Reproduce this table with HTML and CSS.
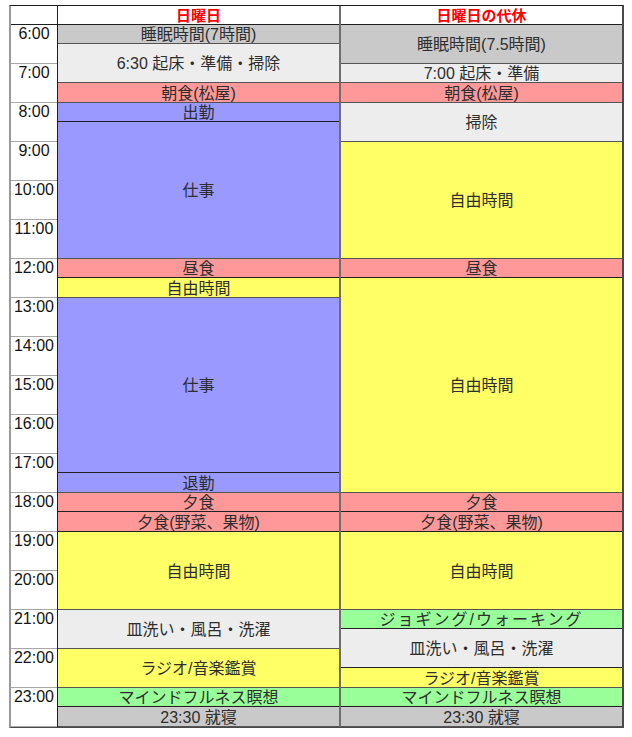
FILE: index.html
```html
<!DOCTYPE html>
<html lang="ja">
<head>
<meta charset="utf-8">
<title>スケジュール</title>
<link rel="stylesheet" href="styles.css">
</head>
<body>
<div class="table">
  <div class="col times">
    <div class="hd"></div>
    <div class="t">6:00</div>
    <div class="t">7:00</div>
    <div class="t">8:00</div>
    <div class="t">9:00</div>
    <div class="t">10:00</div>
    <div class="t">11:00</div>
    <div class="t">12:00</div>
    <div class="t">13:00</div>
    <div class="t">14:00</div>
    <div class="t">15:00</div>
    <div class="t">16:00</div>
    <div class="t">17:00</div>
    <div class="t">18:00</div>
    <div class="t">19:00</div>
    <div class="t">20:00</div>
    <div class="t">21:00</div>
    <div class="t">22:00</div>
    <div class="t">23:00</div>
  </div>
  <div class="col day1">
    <div class="hd red">日曜日</div>
    <div class="b s1 gray">睡眠時間(7時間)</div>
    <div class="b s2 light">6:30 起床・準備・掃除</div>
    <div class="b s1 pink">朝食(松屋)</div>
    <div class="b s1 blue strong">出勤</div>
    <div class="b s7 blue">仕事</div>
    <div class="b s1 pink strong">昼食</div>
    <div class="b s1 yellow">自由時間</div>
    <div class="b s9 blue strong">仕事</div>
    <div class="b s1 blue">退勤</div>
    <div class="b s1 pink strong">夕食</div>
    <div class="b s1 pink strong">夕食(野菜、果物)</div>
    <div class="b s4 yellow">自由時間</div>
    <div class="b s2 light">皿洗い・風呂・洗濯</div>
    <div class="b s2 yellow">ラジオ/音楽鑑賞</div>
    <div class="b s1 green strong">マインドフルネス瞑想</div>
    <div class="b s1 gray">23:30 就寝</div>
  </div>
  <div class="col day2">
    <div class="hd red">日曜日の代休</div>
    <div class="b s2 gray">睡眠時間(7.5時間)</div>
    <div class="b s1 light">7:00 起床・準備</div>
    <div class="b s1 pink">朝食(松屋)</div>
    <div class="b s2 light">掃除</div>
    <div class="b s6 yellow">自由時間</div>
    <div class="b s1 pink strong">昼食</div>
    <div class="b s11 yellow">自由時間</div>
    <div class="b s1 pink strong">夕食</div>
    <div class="b s1 pink strong">夕食(野菜、果物)</div>
    <div class="b s4 yellow">自由時間</div>
    <div class="b s1 green strong wide">ジョギング/ウォーキング</div>
    <div class="b s2 light strong">皿洗い・風呂・洗濯</div>
    <div class="b s1 yellow">ラジオ/音楽鑑賞</div>
    <div class="b s1 green strong">マインドフルネス瞑想</div>
    <div class="b s1 gray">23:30 就寝</div>
  </div>
</div>
</body>
</html>
```
FILE: styles.css
```css
* {
  box-sizing: border-box;
}

body {
  margin: 0;
  background: #ffffff;
  font-family: "Liberation Sans", "Noto Sans CJK JP", sans-serif;
}

.table {
  display: flex;
  width: max-content;
  margin: 5px 0 0 9px;
  border-top: 1px solid #1e1e1e;
  border-left: 2px solid #9a9a9a;
  border-right: 2px solid #4a4a4a;
  border-bottom: 1px solid #4a4a4a;
}

.col {
  display: grid;
  grid-template-rows: 19px repeat(18, 19px 20px);
}

.times {
  width: 47px;
  border-right: 1px solid #1e1e1e;
}

.day1 {
  width: 283px;
  border-right: 2px solid #6e6e6e;
}

.day2 {
  width: 281px;
}

.hd {
  border-bottom: 1px solid #1e1e1e;
  display: flex;
  align-items: center;
  justify-content: center;
  font-size: 15px;
  line-height: 1;
  font-weight: bold;
}

.red {
  color: #ff0000;
}

.t {
  grid-row: span 2;
  border-bottom: 1px solid #a8a8a8;
  padding-top: 1px;
  text-align: center;
  font-size: 16px;
  line-height: 16px;
  color: #141414;
}

.b {
  display: flex;
  align-items: center;
  justify-content: center;
  padding-top: 2px;
  border-bottom: 1px solid #555555;
  font-size: 16px;
  line-height: 1;
  color: #2e2e2e;
  white-space: nowrap;
}

.b.strong {
  border-bottom-color: #222222;
}

.wide {
  letter-spacing: 2px;
}

.s1 { grid-row: span 1; }
.s2 { grid-row: span 2; }
.s4 { grid-row: span 4; }
.s6 { grid-row: span 6; }
.s7 { grid-row: span 7; }
.s9 { grid-row: span 9; }
.s11 { grid-row: span 11; }

.gray { background: #c9c9c9; }
.light { background: #ededed; }
.pink { background: #ff9999; }
.blue { background: #9999ff; }
.yellow { background: #ffff66; }
.green { background: #99ff99; }
```
